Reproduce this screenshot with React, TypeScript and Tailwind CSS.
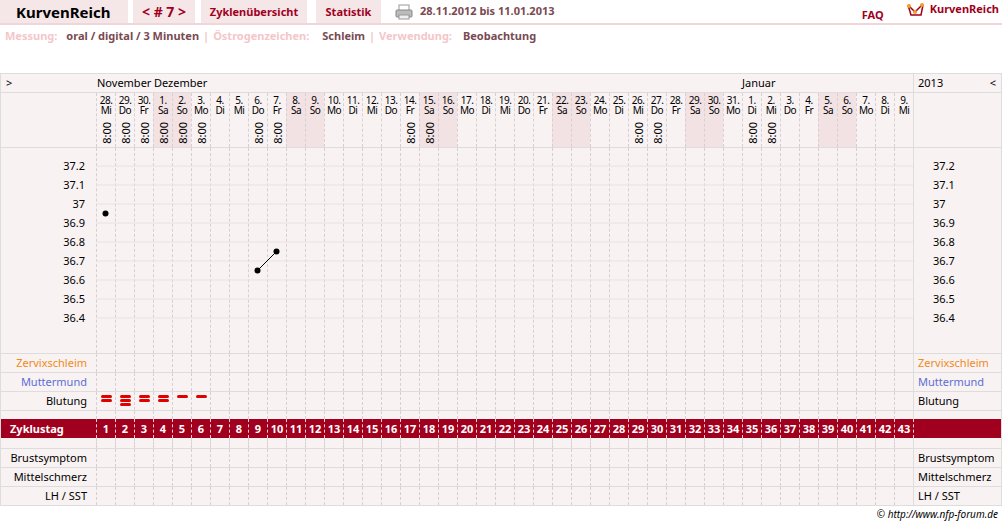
import React from 'react'

const days = ['28.|Mi','29.|Do','30.|Fr','1.|Sa','2.|So','3.|Mo','4.|Di','5.|Mi','6.|Do','7.|Fr','8.|Sa','9.|So','10.|Mo','11.|Di','12.|Mi','13.|Do','14.|Fr','15.|Sa','16.|So','17.|Mo','18.|Di','19.|Mi','20.|Do','21.|Fr','22.|Sa','23.|So','24.|Mo','25.|Di','26.|Mi','27.|Do','28.|Fr','29.|Sa','30.|So','31.|Mo','1.|Di','2.|Mi','3.|Do','4.|Fr','5.|Sa','6.|So','7.|Mo','8.|Di','9.|Mi']
const timed = [1, 2, 3, 4, 5, 6, 9, 10, 17, 18, 29, 30, 35, 36]
const bleeding: Record<number, number> = { 1: 2, 2: 3, 3: 2, 4: 2, 5: 1, 6: 1 }
const temps = ['37.2', '37.1', '37', '36.9', '36.8', '36.7', '36.6', '36.5', '36.4']
const weekend = (i: number) => days[i].endsWith('Sa') || days[i].endsWith('So')

function Cells({ shade, h }: { shade?: boolean; h: string }) {
  return (
    <>
      {days.map((_, i) => (
        <div key={i} className={`w-[19px] shrink-0 border-l border-dashed border-[#d8d0d0] ${h} ${shade && weekend(i) ? 'bg-[#f2e2e4]' : ''}`} />
      ))}
    </>
  )
}

function Row({ label, color = 'text-black', right = true }: { label: string; color?: string; right?: boolean }) {
  return (
    <div className="flex h-[19px] border-t border-[#ddd] text-[11px]">
      <div className={`w-[95px] shrink-0 pr-[9px] text-right leading-[18px] ${color}`}>{label}</div>
      <Cells h="h-[18px]" />
      <div className={`flex-1 border-l border-[#ddd] pl-1 leading-[18px] ${color}`}>{right ? label : ''}</div>
    </div>
  )
}

export default function App() {
  const colX = (d: number) => 95 + (d - 1) * 19 + 9.5
  const tempY = (t: number) => 18 + (37.2 - t) * 190
  return (
    <div className="w-[1002px] h-[526px] bg-white font-['Liberation_Sans'] relative overflow-hidden">
      {/* top bar */}
      <div className="flex h-[25px] items-stretch border-b-2 border-[#f1d6d9] text-[11px] font-bold">
        <div className="w-[128px] bg-[#f5e6e8] text-[15px] text-black pl-4 leading-[24px]">KurvenReich</div>
        <div className="ml-[5px] w-[62px] bg-[#f5e6e8] text-[#a0001e] text-[14px] text-center leading-[24px]">&lt; # 7 &gt;</div>
        <div className="ml-[6px] w-[106px] bg-[#f5e6e8] text-[#a0001e] text-center leading-[24px]">Zyklenübersicht</div>
        <div className="ml-[9px] w-[65px] bg-[#f5e6e8] text-[#a0001e] text-center leading-[24px]">Statistik</div>
        <div className="ml-[14px] flex items-center gap-[7px] text-[#7a4a52]">
          <svg width="18" height="16" viewBox="0 0 18 16">
            <rect x="4" y="1" width="10" height="6" fill="#fff" stroke="#999" />
            <rect x="1" y="6" width="16" height="7" rx="1" fill="#bbb" stroke="#888" />
            <rect x="4" y="11" width="10" height="4" fill="#eee" stroke="#999" />
          </svg>
          28.11.2012 bis 11.01.2013
        </div>
        <div className="flex-1" />
        <div className="text-[#a0001e] leading-[30px] mr-[22px]">FAQ</div>
        <div className="flex items-center gap-1 mr-[3px] -mt-1">
          <svg width="20" height="16" viewBox="0 0 20 16">
            <path d="M2 3 L5 13 L15 13 L17 3" fill="none" stroke="#a0001e" strokeWidth="1.5" />
            <path d="M3 4 L9 10 L16 3" fill="none" stroke="#a0001e" strokeWidth="1.5" />
            <circle cx="3" cy="4" r="2" fill="#f0a020" />
            <circle cx="9" cy="10" r="2" fill="#f0a020" />
            <circle cx="16" cy="3" r="2" fill="#f0a020" />
          </svg>
          <span className="text-[#a0001e] text-[11px]">KurvenReich</span>
        </div>
      </div>
      {/* info line */}
      <div className="flex h-[22px] items-center pl-[5px] text-[11px] font-bold">
        <span className="text-[#f4c6ca]">Messung:</span>
        <span className="ml-[9px] text-[#7a4a52]">oral / digital / 3 Minuten</span>
        <span className="mx-[4px] text-[#f4c6ca]">|</span>
        <span className="text-[#f4c6ca]">Östrogenzeichen:</span>
        <span className="ml-[13px] text-[#7a4a52]">Schleim</span>
        <span className="mx-[4px] text-[#f4c6ca]">|</span>
        <span className="text-[#f4c6ca]">Verwendung:</span>
        <span className="ml-[11px] text-[#7a4a52]">Beobachtung</span>
      </div>
      {/* table */}
      <div className="mt-[26px] w-[1002px] border border-[#ddd] bg-[#f8f2f2]">
        {/* months */}
        <div className="flex h-[18px] text-[11px] text-black leading-[18px]">
          <div className="w-[95px] pl-[5px]">&gt;</div>
          <div className="w-[817px] relative">
            <span className="absolute left-[1px]">November</span>
            <span className="absolute left-[58px]">Dezember</span>
            <span className="absolute left-[646px]">Januar</span>
          </div>
          <div className="flex-1 border-l border-[#ddd] pl-[4px] flex justify-between pr-[5px]"><span>2013</span><span>&lt;</span></div>
        </div>
        {/* dates */}
        <div className="flex h-[55px] border-t border-[#ddd] text-[10px] text-black">
          <div className="w-[95px] shrink-0" />
          {days.map((d, i) => {
            const [n, w] = d.split('|')
            return (
              <div key={i} className={`w-[19px] shrink-0 h-[54px] border-l border-dashed border-[#d8d0d0] flex flex-col items-center leading-[10px] pt-[2px] tracking-[-0.5px] ${weekend(i) ? 'bg-[#f2e2e4]' : ''}`}>
                <span>{n}</span>
                <span>{w}</span>
                {timed.includes(i + 1) && (
                  <span className="mt-[7px] [writing-mode:vertical-rl] rotate-180 text-[11px] leading-[11px] tracking-normal">8:00</span>
                )}
              </div>
            )
          })}
          <div className="flex-1 border-l border-[#ddd]" />
        </div>
        {/* chart */}
        <div className="flex h-[206px] border-t border-[#ddd] text-[11px] relative">
          <div className="w-[95px] shrink-0 flex flex-col pt-[8px] pr-[11px] text-right leading-[19px]">
            {temps.map(t => <span key={t}>{t}</span>)}
          </div>
          <Cells h="h-[205px]" />
          <div className="flex-1 border-l border-[#ddd] flex flex-col pt-[8px] pl-[19px] leading-[19px]">
            {temps.map(t => <span key={t}>{t}</span>)}
          </div>
          <svg className="absolute left-0 top-0" width="912" height="206">
            {temps.map((t, i) => (
              <line key={t} x1="95" x2="912" y1={18 + i * 19} y2={18 + i * 19} stroke="#ebe2e2" />
            ))}
            <line x1={colX(9)} y1={tempY(36.65)} x2={colX(10)} y2={tempY(36.75)} stroke="#000" />
            <circle cx={colX(1)} cy={tempY(36.95)} r="3" fill="#000" />
            <circle cx={colX(9)} cy={tempY(36.65)} r="3" fill="#000" />
            <circle cx={colX(10)} cy={tempY(36.75)} r="3" fill="#000" />
          </svg>
        </div>
        <Row label="Zervixschleim" color="text-[#f08a20]" />
        <Row label="Muttermund" color="text-[#5b6ed6]" />
        <div className="flex h-[19px] border-t border-[#ddd] text-[11px]">
          <div className="w-[95px] shrink-0 pr-[9px] text-right leading-[18px]">Blutung</div>
          {days.map((_, i) => (
            <div key={i} className="w-[19px] shrink-0 h-[18px] border-l border-dashed border-[#d8d0d0] flex flex-col items-center pt-[3px] gap-[1px]">
              {Array.from({ length: bleeding[i + 1] || 0 }).map((_, k) => (
                <div key={k} className="w-[11px] h-[3px] rounded-full bg-[#e00000]" />
              ))}
            </div>
          ))}
          <div className="flex-1 border-l border-[#ddd] pl-1 leading-[18px]">Blutung</div>
        </div>
        <div className="flex h-[9px] border-t border-[#ddd]">
          <div className="w-[95px] shrink-0" />
          <Cells h="h-[8px]" />
          <div className="flex-1 border-l border-[#ddd]" />
        </div>
        <div className="flex h-[19px] bg-[#a0001e] text-white font-bold text-[11px] leading-[19px]">
          <div className="w-[95px] shrink-0 pl-[9px]">Zyklustag</div>
          {days.map((_, i) => (
            <div key={i} className="w-[19px] shrink-0 border-l border-dashed border-[#f0d0d0] text-center">{i + 1}</div>
          ))}
          <div className="flex-1 border-l border-dashed border-[#f0d0d0]" />
        </div>
        <div className="flex h-[10px]">
          <div className="w-[95px] shrink-0" />
          <Cells h="h-[10px]" />
          <div className="flex-1 border-l border-[#ddd]" />
        </div>
        <Row label="Brustsymptom" />
        <Row label="Mittelschmerz" />
        <Row label="LH / SST" />
      </div>
      <div className="text-right pr-[4px] text-[10px] italic text-black mt-[1px]">© http://www.nfp-forum.de</div>
    </div>
  )
}
